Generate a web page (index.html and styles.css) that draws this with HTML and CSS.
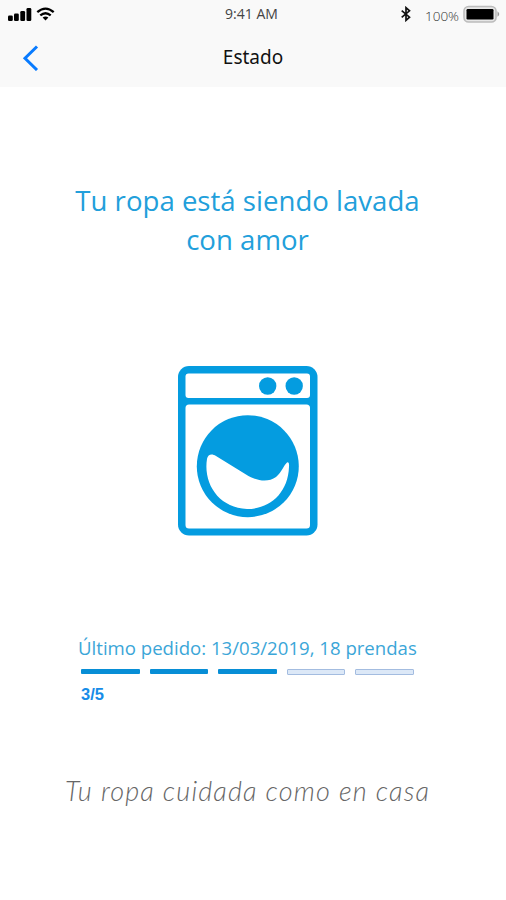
FILE: index.html
```
<!DOCTYPE html>
<html lang="es">
<head>
  <meta charset="UTF-8">
  <meta name="viewport" content="width=device-width, initial-scale=1.0">
  <title>Estado</title>
  <link rel="stylesheet" href="styles.css">
</head>
<body>
  <header class="header">
    <div class="status-bar">
      <div class="signal">
        <svg width="24" height="15" viewBox="0 0 24 15">
          <rect x="0" y="8.5" width="4.8" height="5.5" rx="1.3"/>
          <rect x="6" y="6.5" width="4.8" height="7.5" rx="1.3"/>
          <rect x="12.3" y="4" width="4.8" height="10" rx="1.3"/>
          <rect x="18.5" y="1" width="4.8" height="13" rx="1.3"/>
        </svg>
        <svg width="19" height="15" viewBox="0 0 19 15">
          <path d="M1.3 5.2Q9.5-2 17.7 5.2M4.3 8.4Q9.5 4 14.7 8.4" fill="none" stroke="#000" stroke-width="2.3"/>
          <path d="M6.6 10.6Q9.5 8.4 12.4 10.6L9.5 13.5Z"/>
        </svg>
      </div>
      <span class="time">9:41 AM</span>
      <div class="power">
        <svg class="bluetooth" width="12" height="16" viewBox="0 0 12 16">
          <path d="M1.7 4.6L9.5 11.2L6 14.3V1.7L9.5 4.8L1.7 11.4" fill="none" stroke="#111" stroke-width="1.7"/>
        </svg>
        <span class="percent">100%</span>
        <svg width="37" height="18" viewBox="0 0 37 18">
          <rect x="1" y="1.5" width="32" height="15.5" rx="4.5" fill="#e6e6e6" stroke="#bcbcbc" stroke-width="1.6"/>
          <rect x="3.5" y="4" width="27" height="10.5" rx="1.2"/>
          <path d="M34.5 6.2Q38 9 34.5 11.8Z" fill="#999"/>
        </svg>
      </div>
    </div>
    <nav class="nav-bar">
      <a class="back" href="#" aria-label="Volver">
        <svg width="17" height="27" viewBox="0 0 17 27">
          <path d="M15 2.5L3 14.2L15 26" fill="none" stroke="#087bff" stroke-width="3"/>
        </svg>
      </a>
      <h1 class="nav-title">Estado</h1>
    </nav>
  </header>

  <main class="content">
    <h2 class="message">Tu ropa está siendo lavada<br>con amor</h2>

    <svg class="washer" width="140" height="170" viewBox="0 0 140 170">
      <rect width="139.5" height="169.5" rx="11" fill="#049ce0"/>
      <rect x="7.5" y="7.5" width="124.5" height="24.5" rx="3" fill="#fff"/>
      <rect x="7.5" y="38.5" width="124.5" height="124" rx="3.5" fill="#fff"/>
      <circle cx="89.7" cy="20" r="8.7" fill="#049ce0"/>
      <circle cx="116.2" cy="20" r="8.7" fill="#049ce0"/>
      <circle cx="69.8" cy="100.2" r="51" fill="#049ce0"/>
      <path d="M29 93C30 88 34 87.5 38 90L68 108.5C78 115 90 117 98 111C104 106 106 99 109 96.5Q111.5 95 111 101C110 127 92 143 69 143C41 142 25 118 29 93Z" fill="#fff"/>
    </svg>

    <!-- Order progress -->
    <section class="order">
      <p class="last-order">Último pedido: 13/03/2019, 18 prendas</p>
      <div class="steps">
        <span class="step done"></span>
        <span class="step done"></span>
        <span class="step done"></span>
        <span class="step"></span>
        <span class="step"></span>
      </div>
      <p class="count">3/5</p>
    </section>

    <p class="slogan">Tu ropa cuidada como en casa</p>
  </main>
</body>
</html>
```

FILE: styles.css
```
* {
  box-sizing: border-box;
}
body {
  margin: 0;
  min-height: 900px;
  background: #fff;
  font-family: "Open Sans", "Noto Sans", sans-serif;
}
h1, h2, p {
  margin: 0;
  font-weight: 400;
  white-space: nowrap;
}
svg {
  display: block;
  flex-shrink: 0;
}
.header {
  height: 87px;
  background: #f9f9f9;
}
.status-bar {
  display: grid;
  grid-template-columns: 1fr auto 1fr;
  align-items: center;
  height: 28px;
  padding: 0 6px 0 8px;
}
.signal {
  display: flex;
  gap: 4px;
}
.time {
  font-size: 14px;
  line-height: 20px;
  color: #444;
  padding-right: 5px;
}
.power {
  display: flex;
  align-items: center;
  justify-content: flex-end;
}
.bluetooth {
  margin-right: 13px;
}
.percent {
  font-size: 13.5px;
  font-weight: 300;
  line-height: 18px;
  color: #333;
  padding-top: 3px;
  margin-right: 4px;
}
.nav-bar {
  display: grid;
  grid-template-columns: 1fr auto 1fr;
  align-items: center;
  height: 59px;
  padding: 0 22px;
}
.nav-title {
  font-family: "Noto Sans", sans-serif;
  font-size: 19px;
  color: #111;
  padding-bottom: 2px;
}
.content {
  display: flex;
  flex-direction: column;
  align-items: center;
  padding-right: 11px;
}
.message {
  margin-top: 94px;
  font-size: 27.6px;
  line-height: 39px;
  text-align: center;
  color: #229fdb;
}
.washer {
  margin-top: 107px;
}
.order {
  width: 333px;
  margin-top: 98px;
}
.last-order {
  margin-left: -3px;
  font-size: 18.6px;
  line-height: 28px;
  color: #3ba6d8;
}
.steps {
  display: grid;
  grid-template-columns: repeat(5, 1fr);
  gap: 10px;
  margin-top: 7px;
}
.step {
  height: 6px;
  border: 1px solid #a3bce0;
  border-radius: 1px;
  background: #dce8f7;
}
.step.done {
  height: 5px;
  border: none;
  background: #078ed6;
}
.count {
  margin-top: 9px;
  font-family: "Liberation Sans", sans-serif;
  font-size: 16.5px;
  font-weight: 700;
  line-height: 20px;
  color: #168ce8;
}
.slogan {
  margin-top: 69px;
  font-family: "Segoe Print", "Ink Free", Lato, sans-serif;
  font-size: 27px;
  font-style: italic;
  font-weight: 300;
  letter-spacing: 1.15px;
  line-height: 36px;
  color: #666;
}
```
